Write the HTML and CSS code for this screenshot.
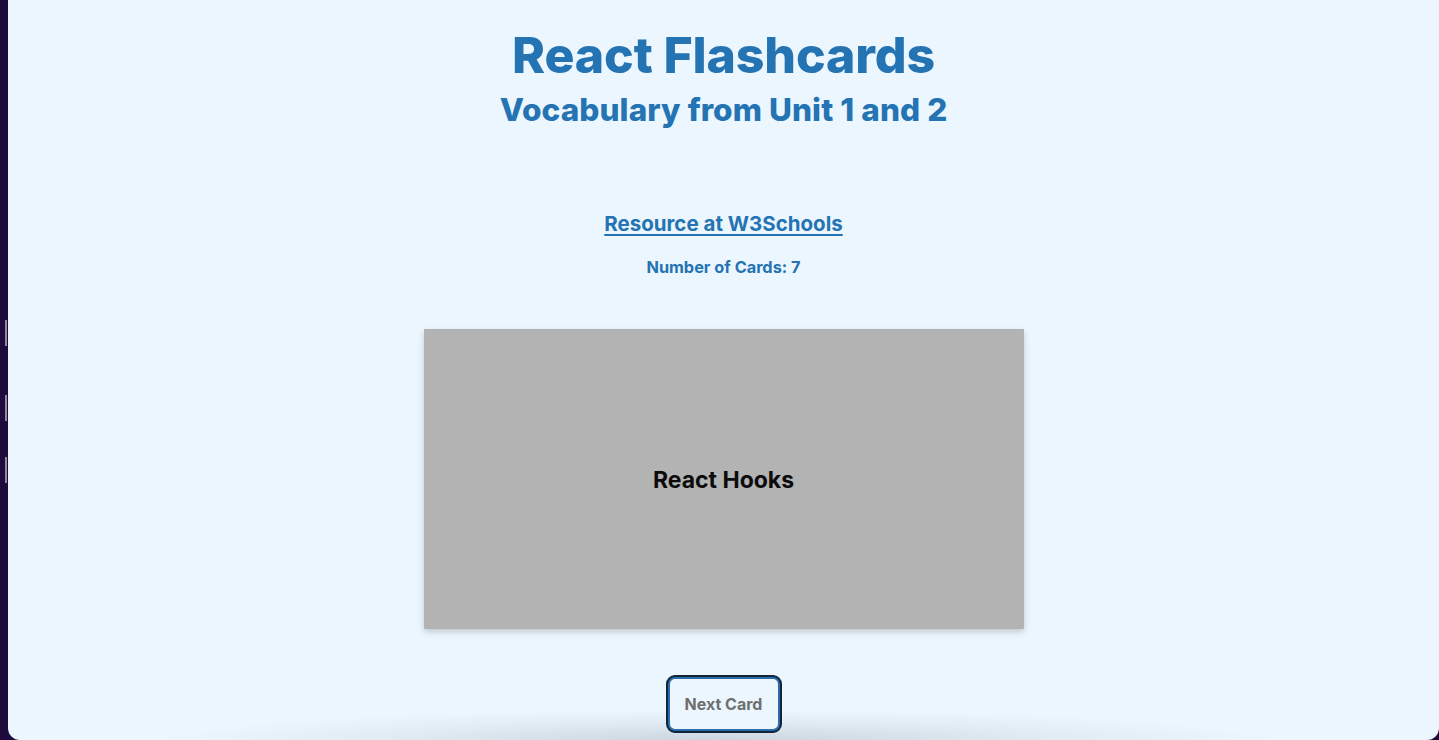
FILE: index.html
```html
<!DOCTYPE html>
<html lang="en">
<head>
<meta charset="utf-8">
<title>React Flashcards</title>
<link rel="stylesheet" href="styles.css">
</head>
<body>
<div class="desktop-edge">
  <span class="edge-mark m1"></span>
  <span class="edge-mark m2"></span>
  <span class="edge-mark m3"></span>
</div>
<div class="window">
  <header class="header">
    <h1 class="title">React Flashcards</h1>
    <h2 class="subtitle">Vocabulary from Unit 1 and 2</h2>
  </header>
  <a class="resource" href="#">Resource at W3Schools</a>
  <p class="count">Number of Cards: 7</p>
  <div class="card">
    <span class="card-text">React Hooks</span>
  </div>
  <button class="next-btn" type="button">Next Card</button>
</div>
</body>
</html>
```
FILE: styles.css
```css
* { box-sizing: border-box; }
html, body { height: 100%; }
body {
  margin: 0;
  display: flex;
  background: #1e0b3c;
  font-family: Inter, "Noto Sans", sans-serif;
  overflow: hidden;
}
.desktop-edge {
  width: 8px;
  flex: none;
  background: #1f0a3e;
  position: relative;
}
.edge-mark {
  position: absolute;
  left: 5px;
  width: 2px;
  height: 26px;
  background: #8f8aa0;
}
.m1 { top: 320px; }
.m2 { top: 395px; }
.m3 { top: 457px; }
.window {
  flex: 1;
  background: #ecf6fe;
  border-radius: 0 0 12px 12px;
  display: flex;
  flex-direction: column;
  align-items: center;
  position: relative;
  overflow: hidden;
}
.window::after {
  content: "";
  position: absolute;
  left: 160px;
  right: 170px;
  bottom: -34px;
  height: 64px;
  background: radial-gradient(ellipse at center, rgba(160,170,185,0.45) 0%, rgba(195,205,215,0.25) 45%, rgba(236,246,254,0) 72%);
  pointer-events: none;
}
.header { text-align: center; padding-top: 24px; }
.title {
  margin: 0;
  font-size: 50px;
  line-height: 62px;
  font-weight: 800;
  color: #2473b3;
  letter-spacing: -0.15px;
}
.subtitle {
  margin: 4px 0 0;
  font-size: 31.5px;
  line-height: 40px;
  font-weight: 800;
  color: #2473b3;
  letter-spacing: 0.1px;
}
.resource {
  margin-top: 80px;
  font-size: 20.5px;
  line-height: 27px;
  font-weight: 700;
  color: #2473b3;
  text-decoration: underline;
  text-underline-offset: 3px;
}
.count {
  margin: 20px 0 0;
  font-size: 16.3px;
  line-height: 20px;
  font-weight: 700;
  color: #2473b3;
}
.card {
  margin-top: 52px;
  width: 600px;
  height: 300px;
  background: #b3b3b3;
  display: flex;
  align-items: center;
  justify-content: center;
  box-shadow: 0 3px 6px rgba(0,0,0,0.18);
}
.card-text {
  font-size: 23px;
  font-weight: 700;
  color: #0b0b0b;
  margin-top: 2px;
}
.next-btn {
  margin-top: 47px;
  width: 114px;
  height: 56px;
  border: 3px solid #2a6ca8;
  outline: 2px solid #10243a;
  outline-offset: -1px;
  border-radius: 8px;
  background: #ecf6fe;
  font-family: Inter, "Noto Sans", sans-serif;
  font-size: 16px;
  font-weight: 700;
  color: #6f6f6f;
  position: relative;
  z-index: 1;
}
```
